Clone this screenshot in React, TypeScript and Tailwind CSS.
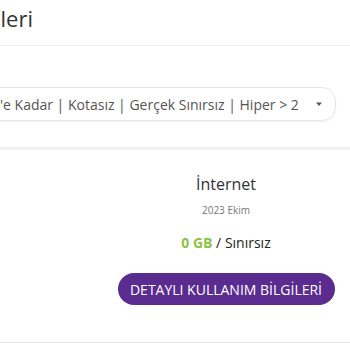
import React from "react";

export default function App() {
  return (
    <div
      className="w-[350px] h-[350px] overflow-hidden bg-white text-[#333]"
      style={{ fontFamily: '"Open Sans", "Noto Sans", sans-serif' }}
    >
      <div className="h-[46px] border-b border-[#ededed] flex items-start">
        <div className="w-[33px] flex justify-end mt-[3px]">
          <span className="whitespace-nowrap text-[22px] leading-[30px] text-[#333]">
            Kullanım Bilgileri
          </span>
        </div>
      </div>

      <div className="pt-[41px] pb-[26px] border-b-[3px] border-[#f3f3f3]">
        <div className="ml-[-30px] w-[366px] h-[34px] rounded-[14px] border border-[#e6e6e6] shadow-[0_1px_2px_rgba(0,0,0,0.05)] flex items-center pr-[12px]">
          <div className="flex-1 overflow-hidden whitespace-nowrap pl-[29px] text-[14px] text-[#555]">
            'e Kadar | Kotasız | Gerçek Sınırsız | Hiper &gt; 2
          </div>
          <svg width="8" height="5" viewBox="0 0 8 5" className="ml-[10px]">
            <path d="M1 0.5 L7 0.5 L4 4 Z" fill="#555" />
          </svg>
        </div>
      </div>

      <div className="flex justify-end pr-[15px] h-[193px] border-b border-[#e6e6e6]">
        <div className="w-[218px] flex flex-col items-center">
          <div className="mt-[23px] text-[16px] leading-[22px] text-[#333]">İnternet</div>
          <div className="mt-[8px] text-[10px] leading-[14px] text-[#777]">2023 Ekim</div>
          <div className="mt-[17px] text-[14px] leading-[18px]">
            <span className="font-bold text-[#8bc34a]">0 GB</span>
            <span className="text-[#222] font-medium"> / Sınırsız</span>
          </div>
          <button className="mt-[21px] w-[217px] h-[32px] rounded-full bg-[#5b2c8f] text-white text-[14px] whitespace-nowrap">
            DETAYLI KULLANIM BİLGİLERİ
          </button>
        </div>
      </div>
    </div>
  );
}
